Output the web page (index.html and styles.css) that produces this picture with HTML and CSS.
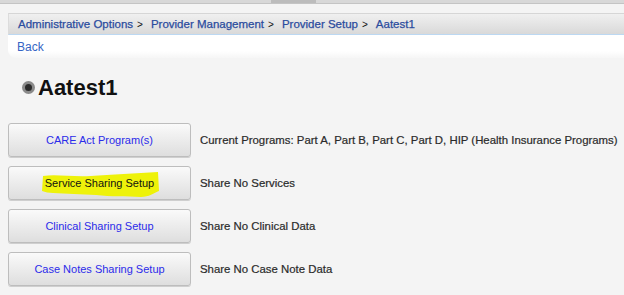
FILE: index.html
```html
<!DOCTYPE html>
<html>
<head>
<meta charset="utf-8">
<link rel="stylesheet" href="styles.css">
</head>
<body>
<div class="topstrip"><span class="tab"></span></div>
<div class="crumbs">
  <a class="crumb">Administrative Options</a><span class="sep">&gt;</span>
  <a class="crumb">Provider Management</a><span class="sep">&gt;</span>
  <a class="crumb">Provider Setup</a><span class="sep">&gt;</span>
  <a class="crumb">Aatest1</a>
</div>
<div class="backrow"><a class="back">Back</a></div>
<h1 class="title"><span class="dot"></span>Aatest1</h1>
<div class="rows">
  <div class="row"><button class="btn">CARE Act Program(s)</button><span class="label">Current Programs: Part A, Part B, Part C, Part D, HIP (Health Insurance Programs)</span></div>
  <div class="row"><button class="btn hl"><svg class="marker" width="120" height="30" viewBox="0 0 120 30"><path d="M2 7 C15 5 30 8 50 7 C70 6 95 4 117 3 L118 22 C113 24 108 28 100 28 C85 27 70 28 55 26 C40 25 25 25 12 24 C8 24 4 23 1 22 Z" fill="#eef20a"/></svg><span class="btxt">Service Sharing Setup</span></button><span class="label">Share No Services</span></div>
  <div class="row"><button class="btn">Clinical Sharing Setup</button><span class="label">Share No Clinical Data</span></div>
  <div class="row"><button class="btn">Case Notes Sharing Setup</button><span class="label">Share No Case Note Data</span></div>
</div>
</body>
</html>
```
FILE: styles.css
```css
html, body { margin: 0; padding: 0; }
body {
  background: #f4f4f4;
  font-family: "Liberation Sans", Arial, sans-serif;
  width: 624px;
  height: 295px;
  overflow: hidden;
}
.topstrip {
  height: 3px;
  background: #d8d8d8;
  border-bottom: 1px solid #c4c4c4;
  display: flex;
}
.tab {
  margin-left: 271px;
  width: 45px;
  height: 3px;
  background: #bcbcbc;
}
.crumbs {
  margin: 9px 0 0 8px;
  height: 20px;
  border-top: 1px solid #d6d6d6;
  border-left: 1px solid #dcdcdc;
  border-bottom: 1px solid #bcd8f2;
  background: linear-gradient(#f0f0f0, #d9d9d9);
  display: flex;
  align-items: center;
  padding-left: 9px;
  font-size: 11.5px;
  white-space: nowrap;
}
.crumb { color: #2b4c9e; font-weight: normal; -webkit-text-stroke: 0.25px #2b4c9e; }
.sep { color: #111; margin: 0 8px 0 4px; font-size: 10px; }
.backrow {
  margin-left: 8px;
  height: 23px;
  background: linear-gradient(#fff 0, #fff 16px, #f6f6f6 23px);
  border-bottom-left-radius: 8px;
  display: flex;
  align-items: center;
  padding-left: 9px;
}
.back { color: #3565c4; font-size: 12px; }
.title {
  margin: 17px 0 0 22px;
  font-size: 22px;
  font-weight: bold;
  color: #111;
  display: flex;
  align-items: center;
  height: 26px;
}
.dot {
  width: 7px;
  height: 7px;
  border-radius: 50%;
  background: #2a2a2a;
  border: 3px solid #8a8a8a;
  margin-right: 3px;
  margin-top: -2px;
}
.rows {
  margin: 22px 0 0 8px;
  display: flex;
  flex-direction: column;
  gap: 9px;
}
.row {
  display: flex;
  align-items: center;
  height: 34px;
}
.btn {
  width: 183px;
  height: 34px;
  border: 1px solid #bdbdbd;
  border-radius: 3px;
  background: linear-gradient(#fafafa, #dedede);
  color: #2b2bea;
  font-family: "Liberation Sans", Arial, sans-serif;
  font-size: 11px;
  padding: 0;
  position: relative;
  box-shadow: 0 1px 0 #cfcfcf;
}
.btn.hl { color: #111; }
.marker { position: absolute; left: 32px; top: 2px; }
.btxt { position: relative; }
.label {
  margin-left: 9px;
  font-size: 11.4px;
  color: #2a2a2a;
  -webkit-text-stroke: 0.2px #2a2a2a;
  white-space: nowrap;
}
```
